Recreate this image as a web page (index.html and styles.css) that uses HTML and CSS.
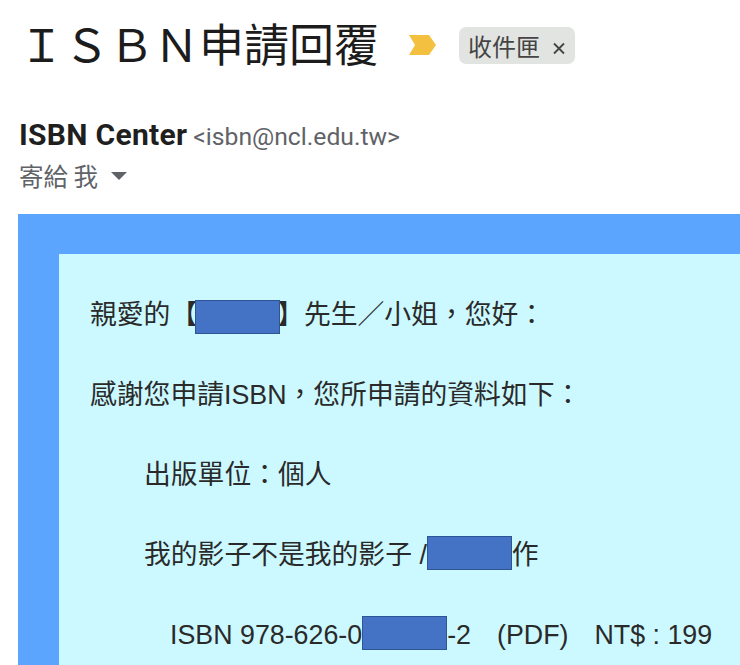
FILE: index.html
```html
<!DOCTYPE html>
<html>
<head>
	<title>ISBN申請回覆</title>
	<meta charset="utf-8">
	<link rel="stylesheet" href="styles.css">
</head>
<body>
	<div id="head">
		<h1 id="subject">ＩＳＢＮ申請回覆</h1>
		<svg class="marker" width="27" height="20" viewBox="0 0 27 20"><polygon points="0,0 20,0 27,10 20,20 0,20 6,10" fill="#f3c03f"/></svg>
		<div class="chip">
			<span>收件匣</span>
			<svg width="14" height="14" viewBox="0 0 14 14"><path d="M2 2.5 L12 12.5 M12 2.5 L2 12.5" stroke="#444" stroke-width="1.8" fill="none"/></svg>
		</div>
	</div>
	<div id="from">
		<b>ISBN Center</b> <span class="addr">&lt;isbn@ncl.edu.tw&gt;</span>
	</div>
	<div id="to">
		<span>寄給 我</span>
		<i class="caret"></i>
	</div>
	<div id="mail">
		<div id="inner">
			<p>親愛的【<span class="gap gap-name"><i class="mask"></i></span>】先生／小姐，您好：</p>
			<p>感謝您申請ISBN，您所申請的資料如下：</p>
			<p class="in1">出版單位：個人</p>
			<p class="in1">我的影子不是我的影子 /<span class="gap"><i class="mask"></i></span>作</p>
			<p class="in2">ISBN 978-626-0<span class="gap"><i class="mask"></i></span>-2<span class="pdf">(PDF)</span><span class="price">NT$ : 199</span></p>
		</div>
	</div>
</body>
</html>
```

FILE: styles.css
```css
*{margin:0;padding:0;box-sizing:border-box;}
html,body{height:665px;overflow:hidden;background:#fff;}
body{font-family:"Liberation Sans","Noto Sans CJK TC",sans-serif;}
#head{display:flex;align-items:center;height:88px;padding-left:19px;}
#subject{font-size:45px;font-weight:400;line-height:56px;margin-top:-3px;color:#1c1c1c;font-family:"Noto Sans CJK TC",sans-serif;white-space:nowrap;}
.marker{margin-left:30px;margin-top:2px;}
.chip{display:flex;align-items:center;gap:12px;height:37px;margin-left:23px;margin-top:3px;padding:0 9px;background:#e2e4e2;border-radius:7px;color:#444;font-size:24px;font-family:"Noto Sans CJK TC",sans-serif;}
.chip svg{margin-top:5px;}
#from{height:38px;margin-top:28px;padding-left:19px;line-height:38px;white-space:nowrap;font-family:Roboto,"Noto Sans CJK TC",sans-serif;}
#from b{font-size:30px;font-weight:700;letter-spacing:.3px;color:#1f1f1f;}
#from .addr{margin-left:2px;font-size:24.7px;color:#5f6368;}
#to{display:flex;align-items:center;height:36px;padding-left:19px;margin-top:3px;color:#5f6368;font-size:24.5px;font-family:"Noto Sans CJK TC",sans-serif;}
.caret{width:0;height:0;margin-left:13px;margin-top:2px;border-left:8px solid transparent;border-right:8px solid transparent;border-top:8px solid #5f6368;}
#mail{margin-top:21px;margin-left:18px;height:451px;padding:40px 0 0 41px;background:#5ca5ff;}
#inner{height:411px;padding:41px 0 0 31px;background:#ccf9ff;color:#2a2a2a;font-size:26.8px;}
#inner p{height:80px;line-height:40px;white-space:nowrap;}
#inner p.in1{padding-left:54px;}
#inner p.in2{padding-left:80px;}
.pdf{margin-left:26px;}
.price{margin-left:26px;}
.gap{position:relative;display:inline-block;width:85px;height:1px;}
.gap-name{width:80px;}
.mask{position:absolute;left:0;top:-27px;width:85px;height:34px;background:#4472c4;border:1px solid #2f5597;}
.gap-name .mask{left:-2px;top:-23px;}
```
